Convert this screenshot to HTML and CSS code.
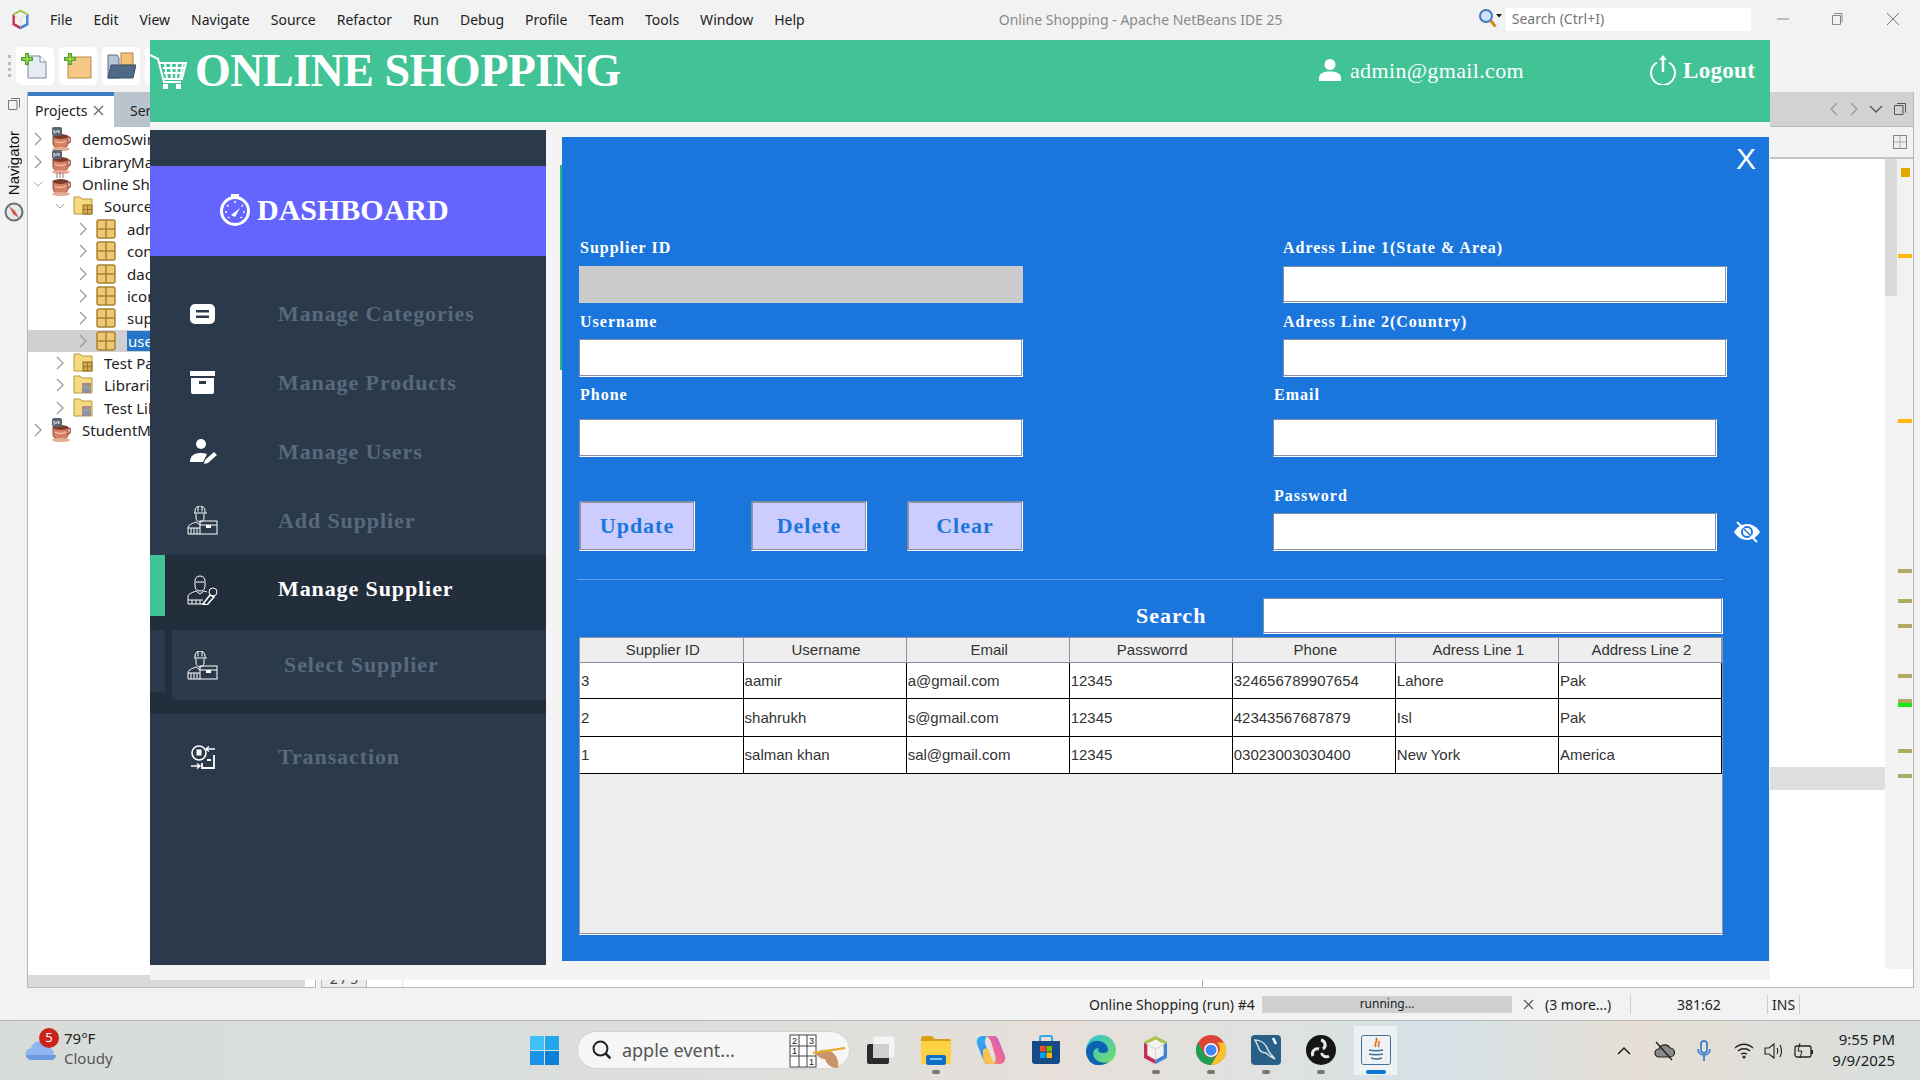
FILE: index.html
```html
<!DOCTYPE html>
<html lang="en">
<head>
    <meta charset="UTF-8">
    <title>Online Shopping - Apache NetBeans IDE 25</title>
    <link rel="stylesheet" href="styles.css">
</head>
<body>
    <svg class="defs" width="0" height="0">
        <symbol id="cup" viewBox="0 0 20 24">
            <path d="M2 9h15v7c0 4-3.500 6-7.500 6S2 20 2 16z" fill="#d77f62" stroke="#8a4a38" stroke-width="1"/>
            <path d="M17 10c3.500 0 3.500 5 0 6" fill="none" stroke="#a85a44" stroke-width="1.600"/>
            <ellipse cx="9.500" cy="9.500" rx="7.500" ry="2.500" fill="#7a3d2c"/>
            <path d="M4 14c3 2 8 2 11 0" fill="none" stroke="#f0bda8" stroke-width="1.500"/>
            <ellipse cx="10" cy="22" rx="9" ry="2" fill="#e8ac96"/>
        </symbol>
        <symbol id="mvn" viewBox="0 0 20 24">
            <use href="#cup"/>
            <rect x="1" y="0" width="10" height="9" rx="2" fill="#5b6470"/>
            <path d="M3 7V3l2 3 1.500-3 1.500 3V3" fill="none" stroke="#e4e8ec" stroke-width=".9"/>
        </symbol>
        <symbol id="steam" viewBox="0 0 20 24">
            <use href="#cup"/>
            <path d="M6 6V1M9 6V0M12 6V1" stroke="#8a7a72" stroke-width="1"/>
        </symbol>
        <symbol id="pkg" viewBox="0 0 20 20">
            <rect x="1" y="1" width="18" height="18" rx="2" fill="#eec877" stroke="#a98232" stroke-width="1.500"/>
            <path d="M1 10h18M10 1v18" stroke="#a98232" stroke-width="1.500"/>
        </symbol>
        <symbol id="folder" viewBox="0 0 20 20">
            <path d="M1 1h6l2 2h10v15H1z" fill="#f4d97e" stroke="#b79a3a"/>
            <rect x="10" y="9" width="9" height="9" fill="#d5a94f" stroke="#8a6a24"/>
            <path d="M14.500 9v9M10 13.500h9" stroke="#8a6a24" stroke-width=".8"/>
        </symbol>
        <symbol id="libs" viewBox="0 0 20 20">
            <path d="M1 1h6l2 2h10v15H1z" fill="#f4d97e" stroke="#b79a3a"/>
            <rect x="9" y="8" width="9" height="3.500" fill="#a8888a"/>
            <rect x="9" y="11.500" width="9" height="3.500" fill="#8a9aa8"/>
            <rect x="9" y="15" width="9" height="3" fill="#9a8aa0"/>
        </symbol>
        <symbol id="chev" viewBox="0 0 10 14">
            <path d="M2 1l6 6-6 6" fill="none" stroke="#9a9a9a" stroke-width="1.300"/>
        </symbol>
        <symbol id="chev-down" viewBox="0 0 14 10">
            <path d="M1 2l6 6 6-6" fill="none" stroke="#9a9a9a" stroke-width="1.300"/>
        </symbol>
        <symbol id="worker-box" viewBox="0 0 31 29">
            <g fill="none" stroke="#fff" stroke-width="1">
                <path d="M8 7V5c0-3 2-5 5-5s5 2 5 5v2"/><path d="M7 7h13M11 .5v5M15 .5v5"/>
                <path d="M9 8v4c0 2 2 4 4 4s4-2 4-4V8"/>
                <path d="M1 28v-6c0-3 3-4 8-6l4 3"/>
                <path d="M1 22h12M1 28h12M4 22v6M7 22v6M10 22v6"/>
                <rect x="13" y="15" width="17" height="13"/><path d="M13 19h17"/>
            </g>
            <rect x="19" y="19" width="5" height="3" fill="#fff"/>
        </symbol>
        <symbol id="np-logo" viewBox="0 0 30 34">
            <path d="M15 1l13 7v3l-13-6-13 6V8z" fill="#a8c24a"/>
            <path d="M2 9l4 2v12l9 5v5L2 26z" fill="#c92d55"/>
            <path d="M28 9l-4 2v12l-9 5v5l13-7z" fill="#3f86d8"/>
            <path d="M15 5l9 6v12l-9 5-9-5V11z" fill="#f2f2ee"/>
            <path d="M6 11l9 5 9-5M15 16v12" fill="none" stroke="#cfcfc8"/>
        </symbol>
    </svg>

    <div class="ide">
        <div class="menubar">
            <svg class="nb-logo" width="19" height="21"><use href="#np-logo"/></svg>
            <nav class="menu">
                <span>File</span><span>Edit</span><span>View</span><span>Navigate</span><span>Source</span><span>Refactor</span><span>Run</span><span>Debug</span><span>Profile</span><span>Team</span><span>Tools</span><span>Window</span><span>Help</span>
            </nav>
            <div class="ide-title">Online Shopping - Apache NetBeans IDE 25</div>
            <svg class="search-glass" width="24" height="22" viewBox="0 0 24 22">
                <circle cx="8" cy="8" r="6" fill="#cfe4fa" stroke="#3f78c4" stroke-width="2"/>
                <path d="M12.500 12.500l5 6" stroke="#d08a1e" stroke-width="3"/>
                <path d="M18 6h6l-3 3.500z" fill="#222"/>
            </svg>
            <div class="quick-search">Search (Ctrl+I)</div>
            <div class="win-controls">
                <svg width="14" height="14" viewBox="0 0 14 14"><path d="M1 7h12" stroke="#888"/></svg>
                <svg width="14" height="14" viewBox="0 0 14 14"><path d="M3 1.500h8v9M1.500 3.500h8v9h-8z" fill="none" stroke="#888"/></svg>
                <svg width="14" height="14" viewBox="0 0 14 14"><path d="M1 1l12 12M13 1L1 13" stroke="#777"/></svg>
            </div>
        </div>

        <div class="toolbar">
            <span class="grip"></span>
            <span class="tool-btn">
                <svg width="28" height="28" viewBox="0 0 28 28">
                    <path d="M7 4h12l6 6v16H7z" fill="#e6ecf4" stroke="#7b8794"/>
                    <path d="M19 4v6h6" fill="#fff" stroke="#7b8794"/>
                    <path d="M6 1v12M0 7h12" stroke="#4fa32e" stroke-width="4"/>
                    <path d="M6 2.500v9M1.500 7h9" stroke="#a6e05a" stroke-width="1.500"/>
                </svg>
            </span>
            <span class="tool-btn">
                <svg width="28" height="28" viewBox="0 0 28 28">
                    <rect x="4" y="5" width="23" height="21" fill="#f5c888" stroke="#b98a4a"/>
                    <path d="M6 1v12M0 7h12" stroke="#4fa32e" stroke-width="4"/>
                    <path d="M6 2.500v9M1.500 7h9" stroke="#a6e05a" stroke-width="1.500"/>
                </svg>
            </span>
            <span class="tool-btn">
                <svg width="30" height="28" viewBox="0 0 30 28">
                    <path d="M2 3h9l2 3v20H2z" fill="#b3c4d6" stroke="#5d6e80"/>
                    <rect x="15" y="1" width="12" height="12" fill="#f2c078" stroke="#a8824a"/>
                    <path d="M2 26l3-13h25l-3 13z" fill="#4f6a87" stroke="#3a5068"/>
                </svg>
            </span>
            <span class="tool-btn"></span>
        </div>

        <div class="workspace">
            <div class="side-strip">
                <svg class="restore-ico" width="14" height="14" viewBox="0 0 14 14"><path d="M4 1.500h8.500v9M1.500 3.500h8.500v9H1.500z" fill="none" stroke="#777"/></svg>
                <span class="strip-label">Navigator</span>
                <svg width="20" height="24" viewBox="0 0 20 24">
                    <circle cx="10" cy="12" r="8.500" fill="#e8e8e8" stroke="#66707a" stroke-width="2"/>
                    <path d="M5 6l6 5 4 7-6-4z" fill="#c95a4a"/>
                </svg>
            </div>

            <div class="projects">
                <div class="panel-tabs">
                    <div class="panel-tab active">Projects
                        <svg width="11" height="11" viewBox="0 0 11 11"><path d="M1 1l9 9M10 1l-9 9" stroke="#666" stroke-width="1.200"/></svg>
                    </div>
                    <div class="panel-tab">Services</div>
                </div>
                <div class="tree">
                    <div class="tree-row d0"><svg class="tw" width="10" height="14"><use href="#chev"/></svg><svg class="ti" width="20" height="24"><use href="#mvn"/></svg><span>demoSwin</span></div>
                    <div class="tree-row d0"><svg class="tw" width="10" height="14"><use href="#chev"/></svg><svg class="ti" width="20" height="24"><use href="#mvn"/></svg><span>LibraryMan</span></div>
                    <div class="tree-row d0"><svg class="tw" width="10" height="14"><use href="#chev-down"/></svg><svg class="ti" width="20" height="24"><use href="#steam"/></svg><span>Online Sho</span></div>
                    <div class="tree-row d1"><svg class="tw" width="10" height="14"><use href="#chev-down"/></svg><svg class="ti" width="20" height="20"><use href="#folder"/></svg><span>Source</span></div>
                    <div class="tree-row d2"><svg class="tw" width="10" height="14"><use href="#chev"/></svg><svg class="ti" width="20" height="20"><use href="#pkg"/></svg><span>adm</span></div>
                    <div class="tree-row d2"><svg class="tw" width="10" height="14"><use href="#chev"/></svg><svg class="ti" width="20" height="20"><use href="#pkg"/></svg><span>con</span></div>
                    <div class="tree-row d2"><svg class="tw" width="10" height="14"><use href="#chev"/></svg><svg class="ti" width="20" height="20"><use href="#pkg"/></svg><span>dao</span></div>
                    <div class="tree-row d2"><svg class="tw" width="10" height="14"><use href="#chev"/></svg><svg class="ti" width="20" height="20"><use href="#pkg"/></svg><span>icon</span></div>
                    <div class="tree-row d2"><svg class="tw" width="10" height="14"><use href="#chev"/></svg><svg class="ti" width="20" height="20"><use href="#pkg"/></svg><span>sup</span></div>
                    <div class="tree-row d2 selected"><svg class="tw" width="10" height="14"><use href="#chev"/></svg><svg class="ti" width="20" height="20"><use href="#pkg"/></svg><span>user</span></div>
                    <div class="tree-row d1"><svg class="tw" width="10" height="14"><use href="#chev"/></svg><svg class="ti" width="20" height="20"><use href="#folder"/></svg><span>Test Pa</span></div>
                    <div class="tree-row d1"><svg class="tw" width="10" height="14"><use href="#chev"/></svg><svg class="ti" width="20" height="20"><use href="#libs"/></svg><span>Librarie</span></div>
                    <div class="tree-row d1"><svg class="tw" width="10" height="14"><use href="#chev"/></svg><svg class="ti" width="20" height="20"><use href="#libs"/></svg><span>Test Lib</span></div>
                    <div class="tree-row d0"><svg class="tw" width="10" height="14"><use href="#chev"/></svg><svg class="ti" width="20" height="24"><use href="#mvn"/></svg><span>StudentMa</span></div>
                </div>
                <div class="hscroll"></div>
            </div>

            <div class="editor">
                <div class="editor-tabs">
                    <svg width="10" height="14"><use href="#chev" transform="matrix(-1 0 0 1 10 0)"/></svg>
                    <svg width="10" height="14"><use href="#chev"/></svg>
                    <svg width="14" height="10" viewBox="0 0 14 10"><path d="M1 2l6 6 6-6" fill="none" stroke="#555" stroke-width="1.300"/></svg>
                    <svg width="14" height="14" viewBox="0 0 14 14"><path d="M4 1.500h8.500v9M1.500 3.500h8.500v9H1.500z" fill="none" stroke="#555"/></svg>
                </div>
                <div class="editor-toolbar">
                    <svg width="14" height="14" viewBox="0 0 14 14"><rect x=".5" y=".5" width="13" height="13" fill="#eee" stroke="#888"/><path d="M7 1v12M1 7h12" stroke="#aaa"/></svg>
                </div>
                <div class="editor-body">
                    <div class="code"><div class="line-hl"></div></div>
                    <div class="vscroll"><div class="vthumb"></div></div>
                    <div class="marks">
                        <span class="mark-top"></span>
                        <span class="mark warn" style="top:95px"></span>
                        <span class="mark warn" style="top:260px"></span>
                        <span class="mark note" style="top:410px"></span>
                        <span class="mark note" style="top:440px"></span>
                        <span class="mark note" style="top:465px"></span>
                        <span class="mark note" style="top:515px"></span>
                        <span class="mark note" style="top:540px"></span>
                        <span class="mark ok" style="top:544px"></span>
                        <span class="mark note" style="top:590px"></span>
                        <span class="mark note" style="top:615px"></span>
                    </div>
                </div>
                <div class="editor-foot">
                    <span class="page-cell">2 / 5</span>
                    <span class="foot-dotted"></span>
                    <span class="foot-line"></span>
                </div>
            </div>
        </div>

        <div class="statusbar">
            <span class="run-name">Online Shopping (run) #4</span>
            <span class="progress">running...</span>
            <svg class="progress-x" width="11" height="11" viewBox="0 0 11 11"><path d="M1 1l9 9M10 1l-9 9" stroke="#555" stroke-width="1.200"/></svg>
            <span class="more">(3 more...)</span>
            <span class="caret-pos">381:62</span>
            <span class="ins">INS</span>
        </div>

        <div class="taskbar">
            <div class="weather">
                <svg width="32" height="22" viewBox="0 0 32 22">
                    <path d="M7 21a6 6 0 0 1-1-12 9 9 0 0 1 17-1 7 7 0 0 1 2 13z" fill="#8fb4ee"/>
                    <path d="M1 16h30c0 3-2 5-5 5H7c-3 0-6-2-6-5z" fill="#6f9ae2"/>
                </svg>
                <span class="badge">5</span>
                <div class="weather-text"><div>79°F</div><div class="weather-sub">Cloudy</div></div>
            </div>
            <svg class="win-logo" width="29" height="29" viewBox="0 0 29 29">
                <rect width="14" height="14" fill="#3ec1f3"/><rect x="15" width="14" height="14" fill="#22a7ee"/>
                <rect y="15" width="14" height="14" fill="#1a93e6"/><rect x="15" y="15" width="14" height="14" fill="#0c7fd8"/>
            </svg>
            <div class="task-search">
                <svg width="22" height="22" viewBox="0 0 22 22"><circle cx="9.500" cy="9.500" r="7" fill="none" stroke="#222" stroke-width="2"/><path d="M14.500 14.500l5 5" stroke="#222" stroke-width="2.500"/></svg>
                <span>apple event...</span>
                <svg class="sudoku" width="60" height="38" viewBox="0 0 60 38">
                    <g fill="#fff" stroke="#444"><rect x="1" y="4" width="26" height="32"/></g>
                    <path d="M10 4v32M18 4v32M1 15h26M1 25h26" stroke="#444"/>
                    <text x="3" y="13" font-size="9" font-family="Liberation Sans" fill="#111">2</text>
                    <text x="20" y="13" font-size="9" font-family="Liberation Sans" fill="#111">3</text>
                    <text x="3" y="23" font-size="9" font-family="Liberation Sans" fill="#111">1</text>
                    <text x="20" y="34" font-size="9" font-family="Liberation Sans" fill="#111">1</text>
                    <path d="M27 22c5-4 12-4 16-1 5 4 7 9 6 16-7 0-11-3-13-9-4 0-7-2-9-6z" fill="#c9946c"/>
                    <path d="M24 22l32-5" stroke="#e8a820" stroke-width="2.200"/>
                </svg>
            </div>

            <div class="task-app">
                <svg class="app-ico" width="30" height="30" viewBox="0 0 30 30">
                    <rect x="7" y="1" width="22" height="22" rx="2" fill="#f4f4f4" stroke="#ddd"/>
                    <rect x="1" y="9" width="22" height="20" rx="2" fill="#2b2b2b"/>
                    <rect x="7" y="9" width="16" height="14" fill="#cfcfcf"/>
                </svg>
            </div>
            <div class="task-app">
                <svg class="app-ico" width="30" height="30" viewBox="0 0 30 30">
                    <path d="M0 3a2 2 0 0 1 2-2h9l3 3h14a2 2 0 0 1 2 2v4H0z" fill="#d9a017"/>
                    <path d="M0 6h30v21a2 2 0 0 1-2 2H2a2 2 0 0 1-2-2z" fill="#fdd144"/>
                    <rect x="5" y="20" width="20" height="10" rx="2" fill="#0f6fc6"/>
                    <rect x="9" y="23" width="12" height="2" fill="#7fc4f4"/>
                </svg>
                <span class="app-dot"></span>
            </div>
            <div class="task-app">
                <svg class="app-ico" width="30" height="30" viewBox="0 0 30 30">
                    <defs>
                        <linearGradient id="cp1" x1="0" y1="0" x2="1" y2="1"><stop offset="0" stop-color="#2bb4ef"/><stop offset="1" stop-color="#4f6cf0"/></linearGradient>
                        <linearGradient id="cp2" x1="1" y1="0" x2="0" y2="1"><stop offset="0" stop-color="#c05be0"/><stop offset=".6" stop-color="#f06a8a"/><stop offset="1" stop-color="#f7a14a"/></linearGradient>
                    </defs>
                    <path d="M11 1h7c3 0 4 2 5 5l6 15c1 4-1 8-5 8h-7c3-2 3-5 2-9l-3-10C15 6 14 4 11 1z" fill="url(#cp2)"/>
                    <path d="M19 29h-7c-3 0-4-2-5-5L1 9c-1-4 1-8 5-8h5c-2 2-3 5-1 10l3 9c1 3 3 7 6 9z" fill="url(#cp1)"/>
                    <path d="M7 15c2-2 5-3 6 1l2 6c1 3 2 5 4 7h-7c-3 0-4-2-5-5z" fill="#f7c24a"/>
                </svg>
            </div>
            <div class="task-app">
                <svg class="app-ico" width="30" height="30" viewBox="0 0 30 30">
                    <path d="M9 6V3a2 2 0 0 1 2-2h8a2 2 0 0 1 2 2v3" fill="none" stroke="#35a7e8" stroke-width="2"/>
                    <path d="M1 6h28v20a3 3 0 0 1-3 3H4a3 3 0 0 1-3-3z" fill="#164a86"/>
                    <rect x="9" y="11" width="5.500" height="5.500" fill="#f25022"/><rect x="15.500" y="11" width="5.500" height="5.500" fill="#7fba00"/>
                    <rect x="9" y="17.500" width="5.500" height="5.500" fill="#00a4ef"/><rect x="15.500" y="17.500" width="5.500" height="5.500" fill="#ffb900"/>
                </svg>
            </div>
            <div class="task-app">
                <svg class="app-ico" width="30" height="30" viewBox="0 0 30 30">
                    <defs><linearGradient id="eg" x1="0" y1="0" x2="1" y2="1"><stop offset="0" stop-color="#2cc3d9"/><stop offset="1" stop-color="#7bdc5f"/></linearGradient></defs>
                    <circle cx="15" cy="15" r="15" fill="url(#eg)"/>
                    <path d="M0 16C1 8 8 5 13 6c6 1 9 5 9 9 0 2-2 3-5 3-5 0-6-3-4-5-5 0-7 4-5 9 2 4 8 7 14 5-3 3-8 3-11 3C5 30 0 23 0 16z" fill="#0c62b0"/>
                </svg>
            </div>
            <div class="task-app">
                <svg class="app-ico" width="27" height="30"><use href="#np-logo"/></svg>
                <span class="app-dot"></span>
            </div>
            <div class="task-app">
                <svg class="app-ico" width="30" height="30" viewBox="0 0 30 30">
                    <circle cx="15" cy="15" r="15" fill="#dc4437"/>
                    <path d="M28 7.500A15 15 0 0 1 15 30l6.500-11A7.500 7.500 0 0 0 21 7.500z" fill="#fbc02d"/>
                    <path d="M2 7.500A15 15 0 0 0 15 30l6-11a7.500 7.500 0 0 1-12.500 0z" fill="#1fa055"/>
                    <circle cx="15" cy="15" r="7" fill="#fff"/><circle cx="15" cy="15" r="5.500" fill="#4285f4"/>
                </svg>
                <span class="app-dot"></span>
            </div>
            <div class="task-app">
                <svg class="app-ico" width="30" height="30" viewBox="0 0 30 30">
                    <rect width="30" height="30" rx="4" fill="#2a6088"/>
                    <path d="M4 5c6 0 11 4 13 10 1 3 4 5 7 9-4-2-6-3-9-6-4 0-7-3-8-7z" fill="none" stroke="#cfdfe8" stroke-width="1.500"/>
                    <path d="M22 3l3 6" stroke="#fff" stroke-width="2.500"/>
                </svg>
                <span class="app-dot"></span>
            </div>
            <div class="task-app">
                <svg class="app-ico" width="30" height="30" viewBox="0 0 30 30">
                    <circle cx="15" cy="15" r="15" fill="#151515"/>
                    <path d="M15 5a5 5 0 0 1 2 9M7 21a5 5 0 0 1 6-7M23 21a5 5 0 0 1-7.500-3" fill="none" stroke="#e8e8e8" stroke-width="3"/>
                </svg>
                <span class="app-dot"></span>
            </div>
            <div class="task-app current">
                <svg class="app-ico" width="30" height="30" viewBox="0 0 30 30">
                    <rect x=".5" y=".5" width="29" height="29" rx="2" fill="#eef2f7" stroke="#4a6f94"/>
                    <path d="M15 3c3 3-3 5 0 9M18 6c1 2-2 3 0 6" fill="none" stroke="#e07a20" stroke-width="1.800"/>
                    <path d="M8 15c3 1 11 1 14 0M8 19c3 1 11 1 14 0M10 23c3 1 8 1 11 0" fill="none" stroke="#4a6f94" stroke-width="1.500"/>
                </svg>
                <span class="app-dot"></span>
            </div>

            <div class="tray">
                <svg width="14" height="9" viewBox="0 0 14 9"><path d="M1 8l6-6 6 6" fill="none" stroke="#222" stroke-width="1.500"/></svg>
                <svg width="22" height="20" viewBox="0 0 22 20"><path d="M6 16a4 4 0 0 1 0-8 6 6 0 0 1 11-1 4.500 4.500 0 0 1 0 9z" fill="#8a8a8a" stroke="#222" stroke-width="1.200"/><path d="M3 1l16 18" stroke="#222" stroke-width="1.400"/></svg>
                <svg width="16" height="22" viewBox="0 0 16 22"><rect x="5" y="1" width="6" height="12" rx="3" fill="none" stroke="#1f6fc6" stroke-width="1.500"/><path d="M2 9c0 8 12 8 12 0M8 16v5" fill="none" stroke="#1f6fc6" stroke-width="1.500"/></svg>
                <svg width="20" height="16" viewBox="0 0 20 16"><path d="M1 5c5-5 13-5 18 0M4 8c3-3 9-3 12 0M7 11c2-1 4-1 6 0" fill="none" stroke="#222" stroke-width="1.300"/><circle cx="10" cy="14" r="1.500" fill="#222"/></svg>
                <svg width="20" height="18" viewBox="0 0 20 18"><path d="M1 6h4l5-4v14l-5-4H1z" fill="none" stroke="#222" stroke-width="1.100"/><path d="M13 6c1 2 1 4 0 6M16 3c2 4 2 8 0 12" fill="none" stroke="#222" stroke-width="1.100"/></svg>
                <svg width="20" height="18" viewBox="0 0 20 18"><rect x="1" y="4" width="16" height="11" rx="2" fill="none" stroke="#222" stroke-width="1.300"/><rect x="17" y="8" width="2" height="4" fill="#222"/><path d="M6 1L4 9h4l-2 7" fill="none" stroke="#222"/></svg>
            </div>
            <div class="clock"><div>9:55 PM</div><div>9/9/2025</div></div>
        </div>
    </div>

    <!-- the running swing app, on top of the ide -->
    <div class="app">
        <header class="app-header">
            <svg class="cart-ico" width="37" height="37" viewBox="0 0 37 37">
                <g fill="none" stroke="#fff" stroke-width="2">
                    <path d="M0 2l8 4 6 23h17"/>
                    <path d="M9 10h27l-4 16H14"/>
                    <path d="M13 15h21M14 20h19M15 10l2 16M21 10l1 16M27 10l-1 16M33 10l-3 16"/>
                </g>
                <rect x="13" y="31" width="5" height="5" fill="#fff"/><rect x="26" y="31" width="5" height="5" fill="#fff"/>
            </svg>
            <h1 class="app-title">ONLINE SHOPPING</h1>
            <svg class="user-ico" width="22" height="22" viewBox="0 0 22 22">
                <circle cx="11" cy="5.500" r="5.500" fill="#fff"/>
                <path d="M0 22v-3c0-5 5-6.500 11-6.500s11 1.500 11 6.500v3z" fill="#fff"/>
            </svg>
            <span class="user-mail">admin@gmail.com</span>
            <svg class="power-ico" width="28" height="30" viewBox="0 0 28 30">
                <path d="M8 7.500a12 12 0 1 0 12 0" fill="none" stroke="#fff" stroke-width="2"/>
                <path d="M14 17V4" stroke="#fff" stroke-width="2.500"/>
                <path d="M10 5l4-5 4 5z" fill="#fff"/>
            </svg>
            <span class="logout">Logout</span>
        </header>

        <div class="app-body">
            <aside class="sidebar">
                <div class="dash-band">
                    <svg width="32" height="32" viewBox="0 0 32 32">
                        <circle cx="16" cy="17" r="13.500" fill="none" stroke="#fff" stroke-width="3"/>
                        <rect x="12" y="0" width="8" height="3" fill="#fff"/>
                        <path d="M16 7v2M8 11l1.500 1.500M24 11l-1.500 1.500M6 18h2M24 18h2M9 24l1.500-1M23 24l-1.500-1" stroke="#fff" stroke-width="1.500"/>
                        <path d="M12 21l9-7-5 9z" fill="#fff"/>
                    </svg>
                    <span>DASHBOARD</span>
                </div>
                <nav class="nav">
                    <a class="nav-item">
                        <span class="nav-ico"><svg width="25" height="20" viewBox="0 0 25 20"><rect width="25" height="20" rx="5" fill="#fff"/><rect x="6" y="6" width="13" height="2.500" fill="#2b3a4a"/><rect x="6" y="11.500" width="13" height="2.500" fill="#2b3a4a"/></svg></span>
                        <span class="nav-text">Manage Categories</span>
                    </a>
                    <a class="nav-item">
                        <span class="nav-ico"><svg width="25" height="23" viewBox="0 0 25 23"><rect width="25" height="5" fill="#fff"/><path d="M1 7h23v14a2 2 0 0 1-2 2H3a2 2 0 0 1-2-2z" fill="#fff"/><rect x="9" y="10" width="7" height="3" fill="#2b3a4a"/></svg></span>
                        <span class="nav-text">Manage Products</span>
                    </a>
                    <a class="nav-item">
                        <span class="nav-ico"><svg width="28" height="27" viewBox="0 0 28 27"><circle cx="12" cy="6" r="5" fill="#fff"/><path d="M1 24c0-7 5-9 11-9 2 0 4 .3 6 1l-4 8z" fill="#fff"/><path d="M15 26l1-4 9-8 3 3-9 8z" fill="#fff"/></svg></span>
                        <span class="nav-text">Manage Users</span>
                    </a>
                    <a class="nav-item">
                        <span class="nav-ico"><svg width="31" height="29"><use href="#worker-box"/></svg></span>
                        <span class="nav-text">Add Supplier</span>
                    </a>
                    <a class="nav-item active">
                        <span class="nav-mark"></span>
                        <span class="nav-ico">
                            <svg width="31" height="30" viewBox="0 0 31 30">
                                <g fill="none" stroke="#fff" stroke-width="1">
                                    <path d="M8 6c0-3 2-5 5-5s5 2 5 5"/><path d="M7 7h12"/>
                                    <path d="M8 8v3c0 3 2 5 5 5s5-2 5-5V8"/>
                                    <path d="M1 29v-7c0-3 3-4 8-6l4 3 4-3 3 1"/>
                                    <path d="M1 25h15M1 29h17M5 25v4M9 25v4M13 25v4"/>
                                    <circle cx="26" cy="17" r="4"/>
                                </g>
                                <path d="M16 29l7-9 4 2-7 8z" fill="none" stroke="#fff" stroke-width="1.500"/>
                            </svg>
                        </span>
                        <span class="nav-text">Manage Supplier</span>
                    </a>
                    <div class="nav-select">
                        <span class="select-stub"></span>
                        <a class="select-panel">
                            <span class="nav-ico"><svg width="31" height="29"><use href="#worker-box"/></svg></span>
                            <span class="nav-text">Select Supplier</span>
                        </a>
                    </div>
                    <a class="nav-item trans">
                        <span class="nav-ico"><svg width="24" height="24" viewBox="0 0 24 24">
                            <circle cx="8" cy="8" r="7" fill="none" stroke="#fff" stroke-width="1.600"/>
                            <rect x="5.500" y="4.500" width="5" height="6" fill="#fff"/>
                            <path d="M24 4h-8M18 1.500L15 4l3 2.500" fill="none" stroke="#fff" stroke-width="1.400"/>
                            <path d="M23 10v13H11v-5M16 15h4" fill="none" stroke="#fff" stroke-width="1.800"/>
                            <path d="M0 21h8M6 18.500L9 21l-3 2.500" fill="none" stroke="#fff" stroke-width="1.400"/>
                        </svg></span>
                        <span class="nav-text">Transaction</span>
                    </a>
                </nav>
            </aside>

            <div class="accent"></div>

            <main class="panel">
                <div class="panel-close">X</div>
                <div class="form">
                    <div class="form-col left">
                        <label class="lbl">Supplier ID</label>
                        <input class="txt readonly" disabled>
                        <label class="lbl">Username</label>
                        <input class="txt tall">
                        <label class="lbl wide">Phone</label>
                        <input class="txt tall">
                        <div class="btn-row">
                            <button class="btn">Update</button>
                            <button class="btn">Delete</button>
                            <button class="btn">Clear</button>
                        </div>
                    </div>
                    <div class="form-col right">
                        <label class="lbl indent">Adress Line 1(State &amp; Area)</label>
                        <input class="txt indent">
                        <label class="lbl indent">Adress Line 2(Country)</label>
                        <input class="txt tall indent">
                        <label class="lbl wide">Email</label>
                        <input class="txt tall">
                        <label class="lbl pass">Password</label>
                        <div class="pass-row">
                            <input class="txt tall">
                            <svg class="eye" width="28" height="22" viewBox="0 0 28 22">
                                <path d="M1 11c3-5 8-8 13-8s10 3 13 8c-3 5-8 8-13 8S4 16 1 11z" fill="#fff"/>
                                <circle cx="14" cy="11" r="5" fill="none" stroke="#1a76dd" stroke-width="2"/>
                                <path d="M4 1l20 20" stroke="#fff" stroke-width="2"/>
                                <path d="M10 7l8 8" stroke="#1a76dd" stroke-width="1.500"/>
                            </svg>
                        </div>
                    </div>
                </div>
                <hr class="sep">
                <div class="search-row">
                    <span class="search-lbl">Search</span>
                    <input class="txt search-input">
                </div>
                <div class="table-wrap">
                    <table class="grid">
                        <thead>
                            <tr><th>Supplier ID</th><th>Username</th><th>Email</th><th>Passworrd</th><th>Phone</th><th>Adress Line 1</th><th>Address Line 2</th></tr>
                        </thead>
                        <tbody>
                            <tr><td>3</td><td>aamir</td><td>a@gmail.com</td><td>12345</td><td>324656789907654</td><td>Lahore</td><td>Pak</td></tr>
                            <tr><td>2</td><td>shahrukh</td><td>s@gmail.com</td><td>12345</td><td>42343567687879</td><td>Isl</td><td>Pak</td></tr>
                            <tr><td>1</td><td>salman khan</td><td>sal@gmail.com</td><td>12345</td><td>03023003030400</td><td>New York</td><td>America</td></tr>
                        </tbody>
                    </table>
                </div>
            </main>
        </div>
    </div>
</body>
</html>
```

FILE: styles.css
```css
* {
    box-sizing: border-box;
}
html, body {
    margin: 0;
    height: 100%;
}
body {
    position: relative;
    width: 1920px;
    height: 1080px;
    overflow: hidden;
    background-color: #f2f2f2;
    font-family: "Noto Sans", sans-serif;
    font-size: 14px;
    color: #222;
}
.defs {
    position: absolute;
}
.ide {
    display: flex;
    flex-direction: column;
    height: 1080px;
}

/* menu bar */
.menubar {
    display: flex;
    align-items: center;
    height: 40px;
    padding: 0 0 2px 11px;
    flex: none;
}
.menu {
    display: flex;
    gap: 21px;
    margin-left: 20px;
}
.ide-title {
    margin-left: 194px;
    width: 290px;
    color: #8a8a8a;
    white-space: nowrap;
}
.search-glass {
    margin-left: 189px;
}
.quick-search {
    width: 245px;
    height: 23px;
    margin-left: 4px;
    padding-left: 6px;
    line-height: 22px;
    background-color: #fff;
    color: #777;
}
.win-controls {
    display: flex;
    gap: 41px;
    margin-left: 25px;
}

/* toolbar */
.toolbar {
    display: flex;
    align-items: center;
    gap: 5px;
    height: 52px;
    padding-left: 8px;
    flex: none;
}
.grip {
    width: 3px;
    height: 22px;
    border-left: 3px dotted #bbb;
}
.tool-btn {
    display: flex;
    align-items: center;
    justify-content: center;
    width: 38px;
    height: 38px;
    background-color: #fff;
    border-radius: 5px;
}

/* ide panels */
.workspace {
    display: flex;
    flex: 1;
    min-height: 0;
}
.side-strip {
    display: flex;
    flex-direction: column;
    align-items: center;
    width: 27px;
    padding-top: 5px;
    flex: none;
}
.restore-ico {
    margin-bottom: 20px;
}
.strip-label {
    writing-mode: vertical-rl;
    transform: rotate(180deg);
    margin-bottom: 5px;
    font-family: "Liberation Sans", sans-serif;
    font-size: 15px;
    color: #111;
}
.projects {
    display: flex;
    flex-direction: column;
    width: 289px;
    background-color: #fff;
    border-left: 1px solid #b8b8b8;
    border-right: 1px solid #b8b8b8;
    border-bottom: 1px solid #b8b8b8;
    flex: none;
}
.panel-tabs {
    display: flex;
    height: 35px;
    flex: none;
    background-color: #d2d2d2;
}
.panel-tab {
    display: flex;
    align-items: center;
    gap: 6px;
    padding: 0 0 3px 16px;
    border-top: 4px solid transparent;
    width: 140px;
    background-color: #bac4ce;
}
.panel-tab.active {
    width: 86px;
    padding-left: 7px;
    background-color: #fff;
    border-top-color: #3b7cc4;
}
.tree {
    flex: 1;
    padding-top: 1px;
    font-size: 15px;
}
.tree-row {
    display: flex;
    align-items: center;
    height: 22.4px;
    white-space: nowrap;
}
.tree-row.d0 {
    padding-left: 5px;
}
.tree-row.d1 {
    padding-left: 27px;
}
.tree-row.d2 {
    padding-left: 50px;
}
.tw {
    margin-right: 8px;
    flex: none;
}
.ti {
    margin-right: 11px;
    flex: none;
}
.tree-row.selected {
    background-color: #d0d0d0;
}
.tree-row.selected span {
    padding: 0 1px;
    background-color: #2675c8;
    color: #fff;
}
.hscroll {
    height: 12px;
    margin-right: 10px;
    background-color: #dadada;
    flex: none;
}
.editor {
    display: flex;
    flex-direction: column;
    width: 1593px;
    margin-left: 5px;
    border-left: 1px solid #b8b8b8;
    border-right: 1px solid #b8b8b8;
    border-bottom: 1px solid #b8b8b8;
    flex: none;
}
.editor-tabs {
    display: flex;
    align-items: center;
    justify-content: flex-end;
    gap: 10px;
    height: 35px;
    padding-right: 6px;
    background-color: #d2d2d2;
    border-bottom: 1px solid #b8b8b8;
    flex: none;
}
.editor-toolbar {
    display: flex;
    align-items: center;
    justify-content: flex-end;
    height: 32px;
    padding-right: 6px;
    border-bottom: 2px solid #c4c4c4;
    flex: none;
}
.editor-body {
    display: flex;
    flex: 1;
    min-height: 0;
}
.code {
    flex: 1;
    background-color: #fff;
}
.line-hl {
    height: 23px;
    margin-top: 608px;
    background-color: #dedede;
}
.vscroll {
    width: 12px;
    background-color: #f4f4f4;
    flex: none;
}
.vthumb {
    height: 137px;
    background-color: #dadada;
}
.marks {
    position: relative;
    width: 16px;
    background-color: #f2f2f2;
    flex: none;
}
.mark {
    position: absolute;
    left: 1px;
    width: 14px;
    height: 4px;
}
.mark.warn {
    background-color: #ffb900;
}
.mark.note {
    background-color: #aeaa66;
}
.mark.ok {
    background-color: #19e619;
}
.mark-top {
    position: absolute;
    left: 4px;
    top: 9px;
    width: 9px;
    height: 9px;
    background-color: #e0a800;
}
.editor-foot {
    display: flex;
    align-items: flex-end;
    height: 18px;
    background-color: #fff;
    flex: none;
}
.page-cell {
    width: 45px;
    height: 16px;
    text-align: center;
    line-height: 16px;
    color: #444;
    background-color: #ececec;
    border-right: 1px solid #bbb;
}
.foot-dotted {
    width: 36px;
    height: 8px;
    border-right: 1px dotted #ccc;
}
.foot-line {
    width: 800px;
    height: 8px;
    border-right: 1px solid #c8a8c8;
}

/* status bar */
.statusbar {
    display: flex;
    align-items: center;
    height: 32px;
    padding-left: 1089px;
    flex: none;
}
.run-name {
    width: 173px;
    white-space: nowrap;
}
.progress {
    width: 250px;
    height: 17px;
    line-height: 16px;
    text-align: center;
    font-size: 12px;
    background-color: #d0d0d0;
}
.progress-x {
    margin-left: 11px;
}
.more {
    width: 85px;
    margin-left: 11px;
}
.caret-pos {
    width: 137px;
    padding-left: 46px;
    border-left: 1px solid #ccc;
}
.ins {
    width: 33px;
    padding-left: 4px;
    border-left: 1px solid #ccc;
    border-right: 1px solid #ccc;
}

/* taskbar */
.taskbar {
    display: flex;
    align-items: flex-start;
    height: 60px;
    border-top: 1px solid #b4b4b4;
    background: linear-gradient(90deg, #d8dcd9 0, #dcdfdb 40%, #e7dfda 55%, #dde2e0 68%, #d4e1e7 75%, #e6dfd6 85%, #d8dedd 100%);
    flex: none;
}
.weather {
    position: relative;
    display: flex;
    align-items: flex-start;
    width: 505px;
    margin-left: 25px;
    padding-top: 18px;
}
.badge {
    position: absolute;
    left: 14px;
    top: 7px;
    width: 20px;
    height: 20px;
    border-radius: 50%;
    background-color: #c8241c;
    color: #fff;
    font-size: 13px;
    line-height: 19px;
    text-align: center;
}
.weather-text {
    margin: -11px 0 0 7px;
    font-size: 15px;
    line-height: 20px;
}
.weather-sub {
    color: #555;
}
.win-logo {
    margin-top: 15px;
    flex: none;
}
.task-search {
    display: flex;
    align-items: center;
    width: 273px;
    height: 38px;
    margin: 10px 3px 0 18px;
    padding-left: 13px;
    background-color: #f6f6f6;
    border-radius: 19px;
    border: 1px solid #d4d4d4;
    font-size: 18px;
    color: #555;
    flex: none;
}
.task-search span {
    margin-left: 9px;
    width: 168px;
}
.sudoku {
    flex: none;
}
.task-app {
    display: flex;
    flex-direction: column;
    align-items: center;
    width: 55px;
    height: 59px;
    padding-top: 14px;
    flex: none;
}
.app-dot {
    width: 8px;
    height: 4px;
    margin-top: 5px;
    background-color: #777;
    border-radius: 2px;
}
.task-app.current .app-dot {
    width: 20px;
    background-color: #0a78d4;
}
.task-app.current {
    background-color: rgba(255, 255, 255, 0.55);
    background-clip: content-box;
    padding: 5px 6px 0;
    height: 54px;
}
.task-app.current .app-ico {
    margin-top: 9px;
}
.tray {
    display: grid;
    grid-template-columns: 40px 40px 40px 40px 20px 40px;
    justify-items: center;
    align-items: center;
    height: 59px;
    margin-left: 201px;
}
.clock {
    width: 71px;
    padding-top: 8px;
    text-align: right;
    font-size: 15px;
    line-height: 21px;
    white-space: nowrap;
}

/* the java app */
.app {
    position: absolute;
    left: 150px;
    top: 40px;
    width: 1620px;
    height: 940px;
    background-color: #f4f4f4;
}
.app-header {
    display: flex;
    align-items: flex-start;
    height: 82px;
    background-color: #41c396;
    color: #fff;
    font-family: "Liberation Serif", serif;
}
.cart-ico {
    margin-top: 13px;
    flex: none;
}
.app-title {
    margin: 8px 0 0 8px;
    font-size: 46px;
    line-height: 46px;
    letter-spacing: -.5px;
    font-weight: bold;
    white-space: nowrap;
}
.user-ico {
    margin: 19px 0 0 auto;
}
.user-mail {
    margin: 17px 0 0 9px;
    width: 299px;
    font-size: 22px;
    line-height: 28px;
    letter-spacing: .35px;
}
.power-ico {
    margin-top: 15px;
}
.logout {
    width: 87px;
    margin: 17px 0 0 6px;
    font-size: 23px;
    line-height: 28px;
    font-weight: bold;
    letter-spacing: .3px;
}
.app-body {
    display: flex;
    align-items: flex-start;
}
.sidebar {
    width: 396px;
    height: 835px;
    margin-top: 8px;
    padding-top: 36px;
    background-color: #2b3a4a;
    font-family: "Liberation Serif", serif;
    flex: none;
}
.dash-band {
    display: flex;
    align-items: center;
    gap: 6px;
    height: 90px;
    padding: 0 0 3px 69px;
    background-color: #6464ff;
    color: #fff;
    font-size: 30px;
    font-weight: bold;
}
.nav {
    margin-top: 23px;
}
.nav-item {
    display: flex;
    align-items: center;
    height: 69px;
    padding-left: 37px;
}
.nav-ico {
    display: flex;
    align-items: center;
    justify-content: center;
    width: 31px;
    margin-right: 60px;
    flex: none;
}
.nav-text {
    font-size: 22px;
    font-weight: bold;
    letter-spacing: .9px;
    color: #58697c;
    white-space: nowrap;
}
.nav-item.active {
    align-items: flex-start;
    height: 75px;
    padding-left: 0;
    background-color: #222e3c;
}
.nav-mark {
    width: 15px;
    height: 61px;
    margin-right: 22px;
    background-color: #41c396;
}
.nav-item.active .nav-ico {
    height: 70px;
}
.nav-item.active .nav-text {
    line-height: 68px;
    color: #fff;
}
.nav-select {
    display: flex;
    height: 84px;
    background-color: #222e3c;
}
.select-stub {
    width: 15px;
    height: 62px;
    margin-right: 7px;
    background-color: #2b3a4a;
}
.select-panel {
    display: flex;
    align-items: center;
    flex: 1;
    height: 70px;
    padding-left: 15px;
    background-color: #2b3a4a;
}
.select-panel .nav-ico {
    margin-right: 66px;
}
.nav-item.trans {
    height: 86px;
}
.accent {
    width: 2px;
    height: 205px;
    margin: 43px 0 0 14px;
    background-color: #2bb58c;
    flex: none;
}
.panel {
    position: relative;
    width: 1207px;
    height: 824px;
    margin-top: 15px;
    padding: 92px 42px 0 17px;
    background-color: #1a76dd;
    font-family: "Liberation Serif", serif;
    color: #fff;
    flex: none;
}
.panel-close {
    position: absolute;
    right: 13px;
    top: 5px;
    font-family: "Liberation Sans", sans-serif;
    font-size: 30px;
}
.form {
    display: flex;
    justify-content: space-between;
    height: 344px;
}
.form-col {
    display: flex;
    flex-direction: column;
    align-items: flex-start;
    flex: none;
}
.form-col.left {
    width: 444px;
}
.form-col.right {
    width: 454px;
}
.lbl {
    display: flex;
    align-items: center;
    height: 36px;
    margin-left: 1px;
    padding-top: 1px;
    font-size: 16px;
    font-weight: bold;
    letter-spacing: 1px;
    white-space: nowrap;
}
.lbl.wide {
    height: 42px;
    padding: 0 0 6px;
}
.lbl.pass {
    height: 36px;
    margin-top: 20px;
}
.lbl.indent {
    margin-left: 10px;
}
.txt {
    display: block;
    width: 444px;
    height: 37px;
    padding: 0 4px;
    background-color: #fff;
    border: 1px solid;
    border-color: #7d8ca5 #fff #fff #7d8ca5;
    box-shadow: inset -1px -1px 0 #8a94a6;
    outline: none;
    flex: none;
}
.txt.tall {
    height: 38px;
}
.txt.indent {
    margin-left: 10px;
}
.txt.readonly {
    background-color: #cccccc;
    border-color: #cccccc;
    box-shadow: none;
}
.form-col .lbl:first-child {
    height: 37px;
    padding-bottom: 0;
}
.btn-row {
    display: flex;
    margin-top: 44px;
}
.btn {
    width: 116px;
    height: 50px;
    margin-right: 56px;
    background-color: #ccccff;
    border: 1px solid;
    border-color: #7d8ca5 #fff #fff #7d8ca5;
    box-shadow: inset -1px -1px 0 #8a94a6, inset 1px 1px 0 #8a94a6;
    color: #1a76dd;
    font-family: "Liberation Serif", serif;
    font-size: 22px;
    font-weight: bold;
    letter-spacing: 1px;
}
.btn:nth-child(2) {
    margin-right: 40px;
}
.btn:last-child {
    margin-right: 0;
}
.pass-row {
    display: flex;
    align-items: center;
}
.eye {
    margin-left: 16px;
    flex: none;
}
.sep {
    width: 1146px;
    height: 1px;
    margin: 6px 0 0 -2px;
    border: none;
    background-color: rgba(255, 255, 255, 0.3);
}
.search-row {
    display: flex;
    align-items: center;
    justify-content: flex-end;
    height: 36px;
    margin-top: 18px;
    padding-right: 4px;
}
.search-lbl {
    width: 127px;
    font-size: 22px;
    font-weight: bold;
    letter-spacing: 1px;
}
.search-input {
    width: 460px;
    height: 36px;
}
.table-wrap {
    width: 1144px;
    height: 298px;
    margin-top: 3px;
    background-color: #ededed;
    border: 1px solid #8a94a6;
    border-bottom-color: #fff;
    box-shadow: inset 0 -1px 0 #8a94a6;
}
.grid {
    width: 100%;
    table-layout: fixed;
    border-collapse: collapse;
    font-family: "Liberation Sans", sans-serif;
    font-size: 15px;
    color: #333;
}
.grid th {
    height: 24px;
    padding: 0 0 0 3px;
    background-color: #eeeeee;
    border-right: 1px solid #8a94a6;
    border-bottom: 1px solid #8a94a6;
    font-weight: normal;
    text-align: center;
}
.grid td {
    padding: 0 0 0 1px;
    background-color: #fff;
    border-right: 1px solid #000;
    border-bottom: 1px solid #000;
}
.grid tbody tr:nth-child(1) {
    height: 36px;
}
.grid tbody tr:nth-child(2) {
    height: 38px;
}
.grid tbody tr:nth-child(3) {
    height: 37px;
}
```
